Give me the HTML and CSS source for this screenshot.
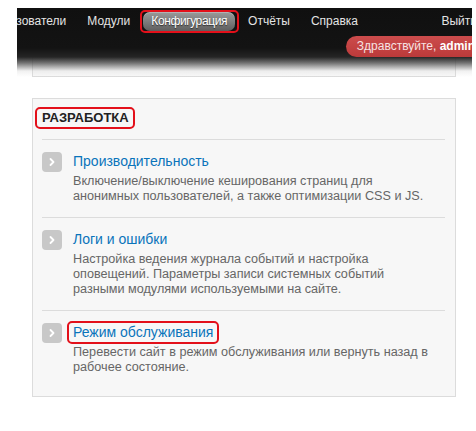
FILE: index.html
```html
<!DOCTYPE html>
<html lang="ru">
<head>
<meta charset="utf-8">
<title>Конфигурация</title>
<link rel="stylesheet" href="styles.css">
</head>
<body>
<header class="toolbar">
  <nav class="menu">
    <a class="menu-item first" href="#">Пользователи</a>
    <a class="menu-item" href="#">Модули</a>
    <a class="menu-item active mark" href="#">Конфигурация</a>
    <a class="menu-item" href="#">Отчёты</a>
    <a class="menu-item" href="#">Справка</a>
    <a class="menu-item logout" href="#">Выйти</a>
  </nav>
  <div class="user-row">
    <span class="greeting">Здравствуйте, <b>admin</b></span>
  </div>
</header>
<main class="content">
  <div class="panel stub"></div>
  <section class="panel block">
    <h2 class="block-title"><span class="mark title-mark">РАЗРАБОТКА</span></h2>
    <ul class="items">
      <li class="item">
        <span class="arrow"><svg width="20" height="20" viewBox="0 0 20 20"><polyline points="8.5,7 11.5,10 8.5,13" fill="none" stroke="#fff" stroke-width="1.8" stroke-linecap="round" stroke-linejoin="round"/></svg></span>
        <div class="item-body">
          <a class="item-link" href="#">Производительность</a>
          <p class="item-desc">Включение/выключение кеширования страниц для анонимных пользователей, а также оптимизации CSS и JS.</p>
        </div>
      </li>
      <li class="item">
        <span class="arrow"><svg width="20" height="20" viewBox="0 0 20 20"><polyline points="8.5,7 11.5,10 8.5,13" fill="none" stroke="#fff" stroke-width="1.8" stroke-linecap="round" stroke-linejoin="round"/></svg></span>
        <div class="item-body">
          <a class="item-link" href="#">Логи и ошибки</a>
          <p class="item-desc">Настройка ведения журнала событий и настройка оповещений. Параметры записи системных событий разными модулями используемыми на сайте.</p>
        </div>
      </li>
      <li class="item">
        <span class="arrow"><svg width="20" height="20" viewBox="0 0 20 20"><polyline points="8.5,7 11.5,10 8.5,13" fill="none" stroke="#fff" stroke-width="1.8" stroke-linecap="round" stroke-linejoin="round"/></svg></span>
        <div class="item-body">
          <a class="item-link mark link-mark" href="#">Режим обслуживания</a>
          <p class="item-desc">Перевести сайт в режим обслуживания или вернуть назад в рабочее состояние.</p>
        </div>
      </li>
    </ul>
  </section>
</main>
</body>
</html>
```
FILE: styles.css
```css
* { box-sizing: border-box; }
html, body { margin: 0; padding: 0; background: #fff; }
body {
  font-family: "Liberation Sans", Arial, sans-serif;
  color: #333;
}

/* toolbar */
.toolbar {
  position: relative;
  z-index: 1;
  margin: 8px 4px 0 17px;
  height: 69px;
  overflow: hidden;
  background: linear-gradient(to bottom,
    #101010 0px, #131313 40px, #252525 49px,
    rgba(70,70,70,0.75) 55px, rgba(200,200,200,0.25) 63px, rgba(255,255,255,0) 69px);
}
.menu {
  display: flex;
  align-items: center;
  gap: 5px;
  height: 28px;
  padding-top: 4px;
  padding-bottom: 5px;
  margin-left: -37px;
}
.menu-item {
  position: relative;
  display: block;
  padding: 0 8px;
  line-height: 19px;
  font-size: 12px;
  color: #e4e4e4;
  text-decoration: none;
  white-space: nowrap;
  border-radius: 7px;
}
.menu-item.active {
  color: #fff;
  letter-spacing: -0.4px;
  text-shadow: 0 1px 1px rgba(0,0,0,0.6);
  background: linear-gradient(to bottom, #9a9a9a 0%, #7d7d7d 50%, #5e5e5e 100%);
  box-shadow: inset 0 1px 0 rgba(255,255,255,0.25);
}
.menu-item.logout { margin-left: auto; margin-right: -13px; }

.user-row {
  display: flex;
  justify-content: flex-end;
}
.greeting {
  display: block;
  height: 21px;
  line-height: 21px;
  padding: 0 11px 0 11px;
  margin-right: -14px;
  border-radius: 11px 0 0 11px;
  font-size: 12px;
  color: #f6e2e2;
  white-space: nowrap;
  background: linear-gradient(to bottom, #cc4c4c 0%, #bb3a3a 100%);
}
.greeting b { color: #fff; }

/* annotation marks */
.mark { position: relative; }
.mark::after {
  content: "";
  position: absolute;
  top: -2px; right: -4px; bottom: -2px; left: -3px;
  border: 2px solid #e3101a;
  border-radius: 5px;
  pointer-events: none;
}

/* content */
.content {
  margin: 0 20px 0 32px;
}
.panel {
  border: 1px solid #dcdcdc;
  background: #f7f7f7;
}
.stub {
  height: 30px;
  margin-top: -30px;
  background: #f9f9f9;
}
.block {
  margin-top: 21px;
  padding: 12px 10px 8px 9px;
}
.block-title {
  margin: 0;
  padding-bottom: 14px;
  border-bottom: 1px solid #dcdcdc;
  font-size: 13px;
  line-height: 14px;
  font-weight: bold;
  color: #222;
}
.title-mark { display: inline-block; }
.title-mark::after { top: -4px; right: -6px; bottom: -4px; left: -7px; }

.items { list-style: none; margin: 0; padding: 0; }
.item {
  display: flex;
  gap: 11px;
  padding: 12px 0 13px;
  border-top: 1px solid #dcdcdc;
}
.item:first-child { border-top: 0; }
.arrow {
  flex: none;
  width: 20px;
  height: 20px;
  border-radius: 4px;
  background: #c8c8c8;
  display: block;
}
.arrow svg { display: block; }
.item-body { flex: 1; }
.item-link {
  display: inline-block;
  font-size: 14px;
  line-height: 16px;
  color: #0a74bb;
  text-decoration: none;
}
.link-mark::after { top: -3px; right: -6px; bottom: -4px; left: -6px; }
.item-desc {
  margin: 4px 13px 0 0;
  font-size: 12.65px;
  line-height: 15px;
  color: #666;
}
```
